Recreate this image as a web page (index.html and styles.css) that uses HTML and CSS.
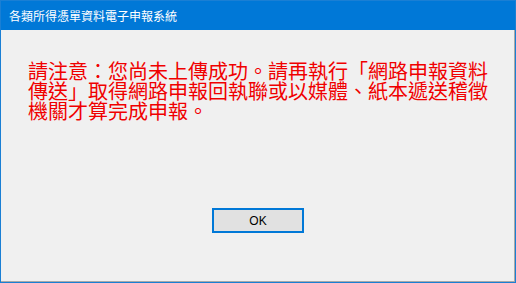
FILE: index.html
```html
<!DOCTYPE html>
<html lang="zh-Hant">
<head>
<meta charset="utf-8">
<link rel="stylesheet" href="styles.css">
</head>
<body>
<div class="window">
  <div class="titlebar">各類所得憑單資料電子申報系統</div>
  <div class="content">
    <div class="message">請注意：您尚未上傳成功。請再執行「網路申報資料傳送」取得網路申報回執聯或以媒體、紙本遞送稽徵機關才算完成申報。</div>
    <div class="actions">
      <button class="btn">OK</button>
    </div>
  </div>
</div>
</body>
</html>
```
FILE: styles.css
```css
html, body {
  margin: 0;
  padding: 0;
  background: #f0f0f0;
}
.window {
  box-sizing: border-box;
  width: 516px;
  height: 283px;
  border: 1px solid #1a7fd4;
  background: #f0f0f0;
  display: flex;
  flex-direction: column;
  overflow: hidden;
}
.titlebar {
  height: 29px;
  flex: none;
  background: #0078d7;
  color: #ffffff;
  font-family: "Noto Sans CJK TC", "Noto Sans", sans-serif;
  font-size: 12px;
  line-height: 29px;
  padding-left: 9px;
  margin: -1px -1px 0 -1px;
  padding-top: 1px;
}
.content {
  flex: 1;
  display: flex;
  flex-direction: column;
  border-right: 1px solid #a8a8a8;
  border-bottom: 1px solid #a8a8a8;
}
.message {
  margin: 31px 0 0 27px;
  width: 470px;
  color: #f00000;
  font-family: "Noto Sans CJK TC", "Noto Sans CJK SC", sans-serif;
  font-size: 20px;
  line-height: 20px;
}
.actions {
  display: flex;
  justify-content: center;
  margin-top: 87px;
}
.btn {
  box-sizing: border-box;
  width: 92px;
  height: 25px;
  border: 2px solid #0078d7;
  background: #e1e1e1;
  color: #000;
  font-family: "Liberation Sans", "Noto Sans", sans-serif;
  font-size: 12px;
  padding: 0;
  margin-left: 1px;
}
```
